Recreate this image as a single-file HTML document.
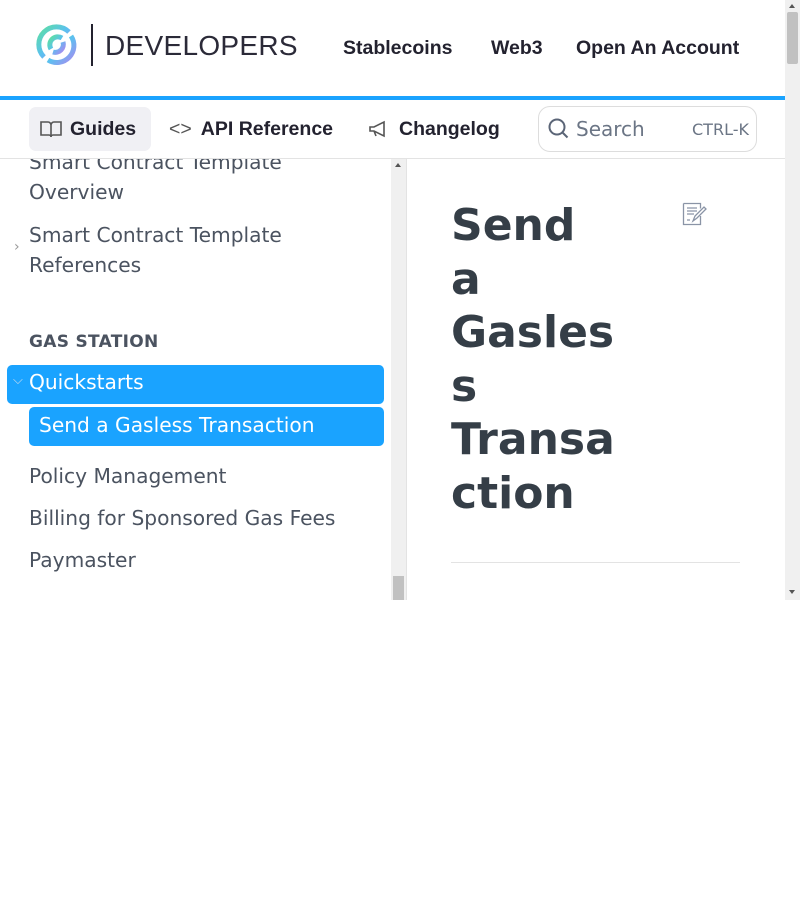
<!DOCTYPE html>
<html><head><style>
*{margin:0;padding:0;box-sizing:border-box}
body{width:800px;height:900px;background:#fff;position:relative;overflow:hidden;font-family:"DejaVu Sans",sans-serif}
.hdr{position:absolute;left:0;top:0;width:785px;height:96px;background:#fff}
.blue{position:absolute;left:0;top:96px;width:785px;height:4px;background:#1aa3ff}
.nav{position:absolute;left:0;top:100px;width:785px;height:59px;border-bottom:1px solid #e3e3e3;background:#fff}
.hn{position:absolute;top:37px;font:bold 19.5px "Liberation Sans",sans-serif;color:#23222f}
.tab{position:absolute;top:7px;height:44px;display:flex;align-items:center;font:bold 19.5px "Liberation Sans",sans-serif;color:#23222f}
.side{position:absolute;left:0;top:159px;width:391px;height:441px;overflow:hidden;color:#4b5360;font-size:20.2px}
.side .it{position:absolute;left:29px;line-height:30px}
.sb{position:absolute;left:391px;top:159px;width:15px;height:441px;background:#f0f0f0}
.pg{position:absolute;left:785px;top:0;width:15px;height:600px;background:#f0f0f0}
h1{position:absolute;left:451px;top:199px;width:168px;font:bold 44px/53.5px "DejaVu Sans",sans-serif;color:#353e47;overflow-wrap:anywhere;word-break:normal}
</style></head><body>
<div class="hdr">
<svg style="position:absolute;left:36px;top:24px" width="42" height="42" viewBox="0 0 42 42"><defs><linearGradient id="g" x1="0" y1="0" x2="1" y2="1"><stop offset="0" stop-color="#5de0a0"/><stop offset=".5" stop-color="#5bc0f0"/><stop offset="1" stop-color="#a98af0"/></linearGradient></defs><path d="M8 33 A17 17 0 0 1 33 8" stroke="url(#g)" stroke-width="5" fill="none"/><path d="M35 12 A17 17 0 0 1 12 36" stroke="url(#g)" stroke-width="5" fill="none"/><path d="M15 25 A8 8 0 0 1 26 14 M27 18 A8 8 0 0 1 17 28" stroke="url(#g)" stroke-width="5" fill="none"/></svg>
<div style="position:absolute;left:91px;top:24px;width:2px;height:42px;background:#23222f"></div>
<div style="position:absolute;left:105px;top:30px;font:28px 'Liberation Sans',sans-serif;color:#2b2a38;letter-spacing:0.3px">DEVELOPERS</div>
<div class="hn" style="left:343px">Stablecoins</div>
<div class="hn" style="left:491px">Web3</div>
<div class="hn" style="left:576px">Open An Account</div>
</div>
<div class="blue"></div>
<div class="nav">
<div class="tab" style="left:29px;width:122px;background:#f0f0f4;border-radius:7px;padding-left:11px"><svg width="22" height="18" viewBox="0 0 22 18" style="margin-right:8px"><path d="M1 2h7a3 3 0 0 1 3 3v12a2 2 0 0 0-2-2H1zM21 2h-7a3 3 0 0 0-3 3v12a2 2 0 0 1 2-2h8z" fill="none" stroke="#555" stroke-width="1.6"/></svg>Guides</div>
<div class="tab" style="left:169px"><span style="font-weight:normal;color:#555;margin-right:9px">&lt;&gt;</span>API Reference</div>
<div class="tab" style="left:368px"><svg width="22" height="18" viewBox="0 0 22 18" style="margin-right:9px"><path d="M2 7h4l10-5v14L6 11H2zM6 11l2 5" fill="none" stroke="#555" stroke-width="1.6"/></svg>Changelog</div>
<div style="position:absolute;left:538px;top:6px;width:219px;height:46px;border:1px solid #ddd;border-radius:12px">
<svg style="position:absolute;left:9px;top:11px" width="22" height="22" viewBox="0 0 22 22"><circle cx="9" cy="9" r="7.5" fill="none" stroke="#5b6577" stroke-width="2"/><path d="M14.5 14.5l5 5" stroke="#5b6577" stroke-width="2"/></svg>
<div style="position:absolute;left:37px;top:10px;font-size:20px;color:#6b7585">Search</div>
<div style="position:absolute;left:153px;top:13px;font-size:16px;color:#6b7585">CTRL-K</div>
</div>
</div>
<div class="side">
<div class="it" style="top:-12px">Smart Contract Template<br>Overview</div>
<div style="position:absolute;left:14px;top:80px;color:#999;font-size:14px">›</div>
<div class="it" style="top:61px">Smart Contract Template<br>References</div>
<div style="position:absolute;left:29px;top:173px;font-size:17px;font-weight:bold;color:#4b5360;letter-spacing:.3px">GAS STATION</div>
<div style="position:absolute;left:7px;top:206px;width:377px;height:39px;background:#1aa3ff;border-radius:5px;color:#fff"><span style="position:absolute;left:6px;top:8px;font-size:13px;color:#cde">⌵</span><span style="position:absolute;left:22px;top:5px">Quickstarts</span></div>
<div style="position:absolute;left:29px;top:248px;width:355px;height:39px;background:#1aa3ff;border-radius:5px;color:#fff"><span style="position:absolute;left:10px;top:6px">Send a Gasless Transaction</span></div>
<div class="it" style="top:302px">Policy Management</div>
<div class="it" style="top:344px">Billing for Sponsored Gas Fees</div>
<div class="it" style="top:386px">Paymaster</div>
</div>
<div class="sb"><div style="position:absolute;left:4px;top:4px;border:3.5px solid transparent;border-bottom:4px solid #555;border-top:0"></div><div style="position:absolute;left:2px;top:417px;width:11px;height:24px;background:#c1c1c1"></div></div>
<div style="position:absolute;left:406px;top:159px;width:1px;height:441px;background:#e3e3e3"></div>
<h1>Send a Gasless Transaction</h1>
<svg style="position:absolute;left:682px;top:202px" width="26" height="24" viewBox="0 0 26 24"><path d="M1.5 1.5h17v5M18.5 14v8.5h-17v-21" fill="none" stroke="#8a94a6" stroke-width="1.3"/><path d="M5 6h10M5 9h10M5 12h7M5 18h3" stroke="#8a94a6" stroke-width="1.2"/><path d="M11 19l2-5 9-9 2 2-9 9z" fill="none" stroke="#8a94a6" stroke-width="1.3"/></svg>
<div style="position:absolute;left:451px;top:562px;width:289px;height:1px;background:#e3e3e3"></div>
<div class="pg"><div style="position:absolute;left:2px;top:12px;width:11px;height:52px;background:#c1c1c1;border-radius:2px"></div><div style="position:absolute;left:4px;top:4px;border:3.5px solid transparent;border-bottom:4px solid #555;border-top:0"></div><div style="position:absolute;left:4px;top:590px;border:3.5px solid transparent;border-top:4px solid #555;border-bottom:0"></div></div>
</body></html>
